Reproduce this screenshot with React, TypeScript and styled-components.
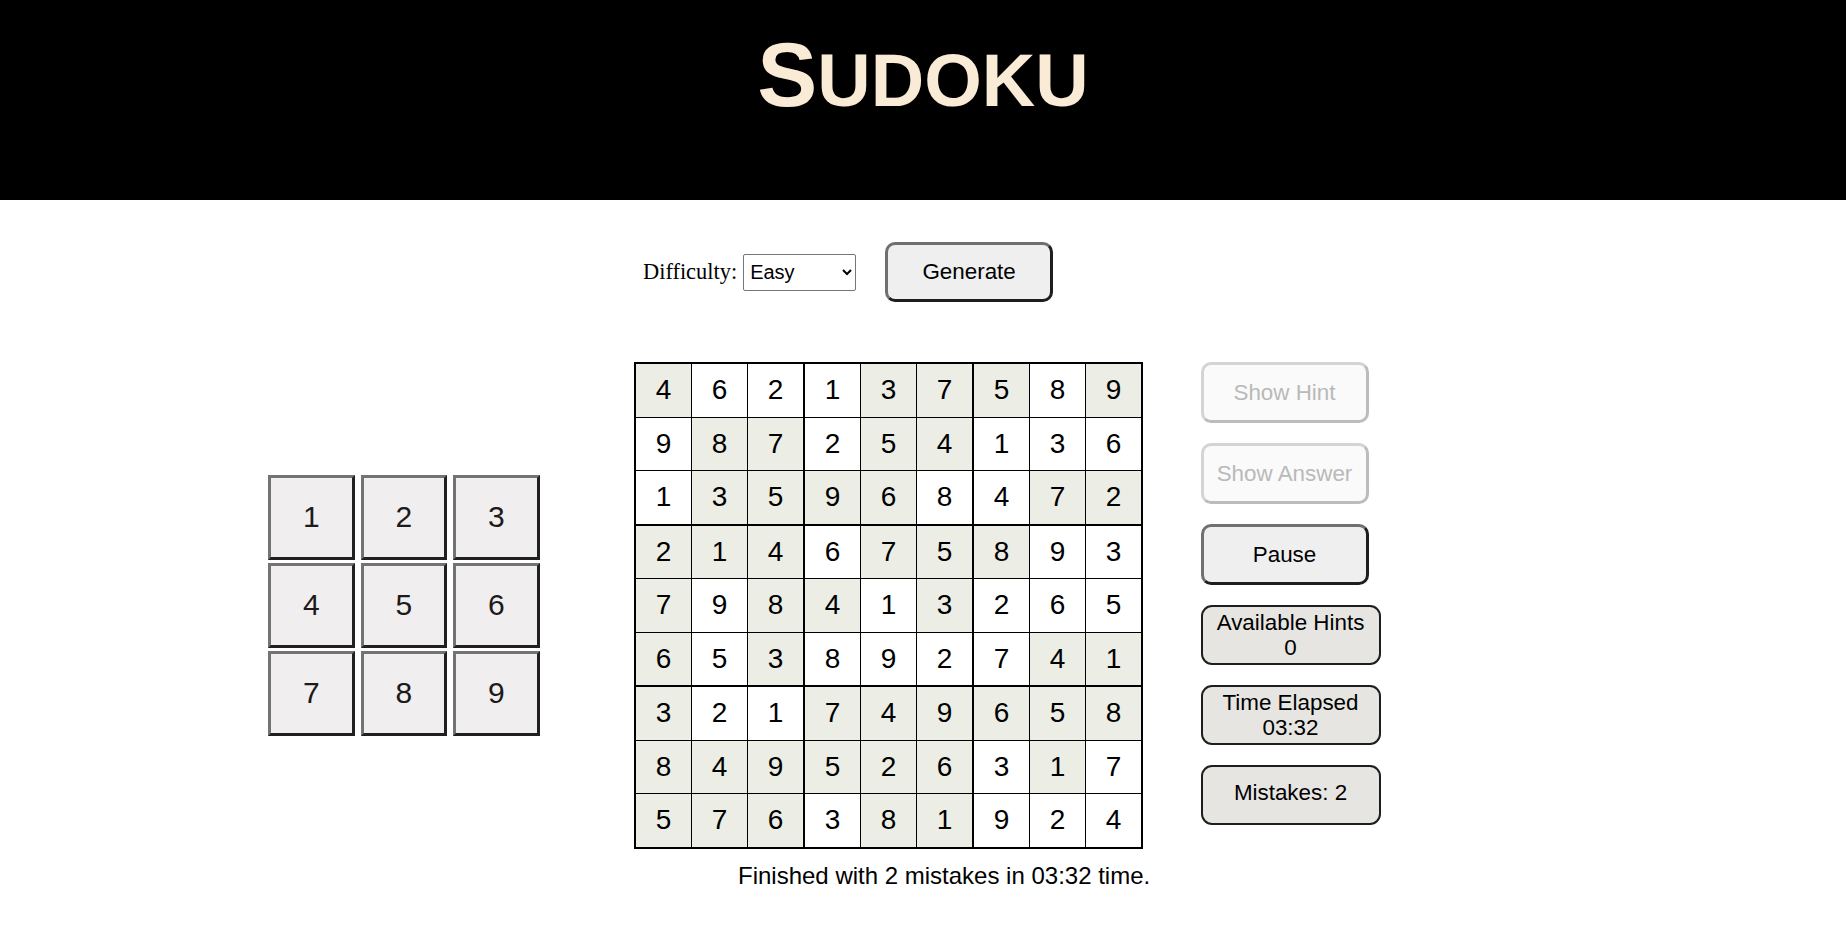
import React from "react";
import styled, { createGlobalStyle } from "styled-components";

const GlobalStyle = createGlobalStyle`
  html, body {
    margin: 0;
    padding: 0;
    background: #ffffff;
    font-family: "Liberation Sans", Arial, sans-serif;
    color: #000;
  }
`;

const Header = styled.header`
  height: 200px;
  box-sizing: border-box;
  padding-top: 30px;
  background: #000000;
  text-align: center;
`;

const Title = styled.h1`
  margin: 0;
  font-family: "Liberation Sans", Arial, sans-serif;
  font-weight: 700;
  font-size: 90px;
  line-height: 90px;
  color: #faebd7;
  text-transform: uppercase;
`;

const TitleRest = styled.span`
  font-size: 74px;
`;

const Controls = styled.div`
  display: flex;
  align-items: center;
  padding: 42px 0 0 643px;
  height: 60px;
`;

const Label = styled.label`
  font-family: "Liberation Serif", "Times New Roman", serif;
  font-size: 22.4px;
  margin-right: 6px;
`;

const Select = styled.select`
  width: 113px;
  height: 37px;
  font-family: "Liberation Sans", Arial, sans-serif;
  font-size: 20px;
  border: 1px solid #767676;
  border-radius: 2px;
  background: #fff;
  color: #000;
  padding: 0 2px;
  margin-right: 29px;
`;

const Button = styled.button<{ $w: number; $h: number }>`
  width: ${(p) => p.$w}px;
  height: ${(p) => p.$h}px;
  box-sizing: border-box;
  font-family: "Liberation Sans", Arial, sans-serif;
  font-size: 22.4px;
  background: #efefef;
  color: #000;
  border: 3px solid;
  border-color: #707070 #1e1e1e #1e1e1e #707070;
  border-radius: 10px;
  padding: 0;
  cursor: pointer;

  &:disabled {
    background: #fafafa;
    color: #b9b9b9;
    border-color: #d4d4d4 #bcbcbc #bcbcbc #d4d4d4;
    cursor: default;
  }
`;

const Main = styled.div`
  display: flex;
  align-items: flex-start;
  padding: 60px 0 0 268px;
`;

const NumPad = styled.div`
  align-self: center;
  display: grid;
  grid-template-columns: repeat(3, 86.5px);
  grid-auto-rows: 85px;
  column-gap: 6px;
  row-gap: 3px;
  margin-right: 94.5px;
`;

const PadKey = styled.button`
  box-sizing: border-box;
  font-family: "Liberation Sans", Arial, sans-serif;
  font-size: 30px;
  color: #1c1a1a;
  background: #f0eeee;
  border: 3px solid;
  border-color: #737373 #202020 #202020 #737373;
  padding: 0;
  cursor: pointer;
`;

const Board = styled.div`
  display: grid;
  grid-template-columns: repeat(9, auto);
  border: 2px solid #000;
  width: max-content;
`;

const Cell = styled.div<{ $shaded: boolean; $right: number; $bottom: number }>`
  width: 55px;
  height: 52.5px;
  display: flex;
  align-items: center;
  justify-content: center;
  font-size: 28px;
  color: #000;
  background: ${(p) => (p.$shaded ? "#ecede5" : "#ffffff")};
  border-right: ${(p) => p.$right}px solid #000;
  border-bottom: ${(p) => p.$bottom}px solid #000;
`;

const Side = styled.div`
  display: flex;
  flex-direction: column;
  gap: 20px;
  margin-left: 57.5px;
`;

const InfoBox = styled.div<{ $lift?: number }>`
  width: 180px;
  height: 60px;
  box-sizing: border-box;
  display: flex;
  flex-direction: column;
  align-items: center;
  justify-content: center;
  padding-bottom: ${(p) => p.$lift ?? 0}px;
  border: 2px solid #1e1e1e;
  border-radius: 11px;
  background: #e6e5e1;
  font-size: 22.4px;
  line-height: 25px;
  text-align: center;
`;

const Finished = styled.p`
  margin: 13px 0 0 0;
  padding-left: 738px;
  font-size: 24px;
`;

const values = [
  "462137589",
  "987254136",
  "135968472",
  "214675893",
  "798413265",
  "653892741",
  "321749658",
  "849526317",
  "576381924",
];

const shade = [
  "SWWWSSSWS",
  "WSSWSSWWW",
  "WSSSSWWSS",
  "SSSWSSSWW",
  "SWSSWSWWW",
  "SWSWWWWSS",
  "SWWSSSSSS",
  "SSSSSSWSW",
  "SSSWSSWWW",
];

const lineWidth = (i: number) => (i === 8 ? 0 : i === 2 || i === 5 ? 2 : 1);

export default function App() {
  return (
    <>
      <GlobalStyle />
      <Header>
        <Title>
          S<TitleRest>udoku</TitleRest>
        </Title>
      </Header>
      <Controls>
        <Label htmlFor="difficulty">Difficulty:</Label>
        <Select id="difficulty" defaultValue="easy">
          <option value="easy">Easy</option>
          <option value="medium">Medium</option>
          <option value="hard">Hard</option>
        </Select>
        <Button $w={168} $h={60}>Generate</Button>
      </Controls>
      <Main>
        <NumPad>
          {[1, 2, 3, 4, 5, 6, 7, 8, 9].map((n) => (
            <PadKey key={n}>{n}</PadKey>
          ))}
        </NumPad>
        <Board>
          {values.map((row, r) =>
            row.split("").map((v, c) => (
              <Cell
                key={`${r}-${c}`}
                $shaded={shade[r][c] === "S"}
                $right={lineWidth(c)}
                $bottom={lineWidth(r)}
              >
                {v}
              </Cell>
            ))
          )}
        </Board>
        <Side>
          <Button $w={168} $h={61} disabled>
            Show Hint
          </Button>
          <Button $w={168} $h={61} disabled>
            Show Answer
          </Button>
          <Button $w={168} $h={61}>Pause</Button>
          <InfoBox>
            <span>Available Hints</span>
            <span>0</span>
          </InfoBox>
          <InfoBox>
            <span>Time Elapsed</span>
            <span>03:32</span>
          </InfoBox>
          <InfoBox $lift={6}>
            <span>Mistakes: 2</span>
          </InfoBox>
        </Side>
      </Main>
      <Finished>Finished with 2 mistakes in 03:32 time.</Finished>
    </>
  );
}
